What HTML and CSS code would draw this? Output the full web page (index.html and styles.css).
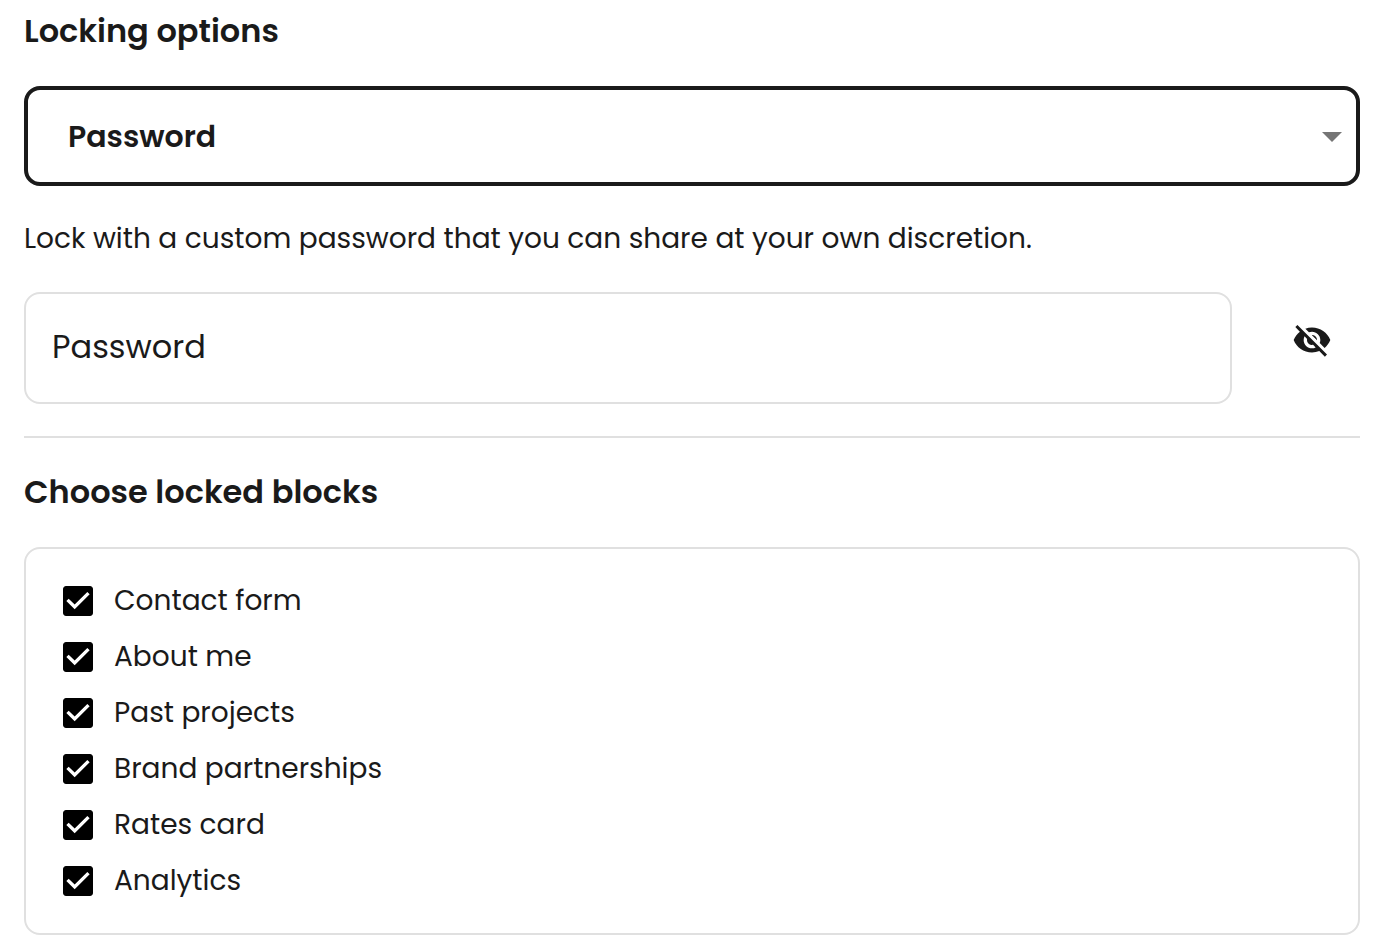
FILE: index.html
```html
<!DOCTYPE html>
<html lang="en">
<head>
    <meta charset="utf-8">
    <title>Locking options</title>
    <link rel="stylesheet" href="styles.css">
</head>
<body>
    <form class="lock-form">
        <section class="options">
            <h2 id="lockingTitle">Locking options</h2>
            <div class="select-wrap">
                <select class="lock-type" aria-labelledby="lockingTitle">
                    <option>Password</option>
                </select>
                <svg class="arrow" viewBox="0 0 20 10" aria-hidden="true"><path d="M0 0h20L10 10z"/></svg>
            </div>
            <p class="hint">Lock with a custom password that you can share at your own discretion.</p>
            <div class="password-row">
                <input class="password" type="text" placeholder="Password" aria-label="Password">
                <button class="toggle" type="button" aria-label="Show password">
                    <svg viewBox="0 0 24 24" aria-hidden="true"><path d="M12 7c2.76 0 5 2.24 5 5 0 .65-.13 1.26-.36 1.83l2.92 2.92c1.51-1.26 2.7-2.89 3.43-4.75-1.73-4.39-6-7.5-11-7.5-1.4 0-2.74.25-3.98.7l2.16 2.16C10.74 7.13 11.35 7 12 7zM2 4.27l2.28 2.28.46.46C3.08 8.3 1.78 10.02 1 12c1.73 4.39 6 7.5 11 7.5 1.55 0 3.03-.3 4.38-.84l.42.42L19.73 22 21 20.73 3.27 3 2 4.27zM7.53 9.8l1.55 1.55c-.05.21-.08.43-.08.65 0 1.66 1.34 3 3 3 .22 0 .44-.03.65-.08l1.55 1.55c-.67.33-1.41.53-2.2.53-2.76 0-5-2.24-5-5 0-.79.2-1.53.53-2.2zm4.31-.78l3.15 3.15.02-.16c0-1.66-1.34-3-3-3l-.17.01z"/></svg>
                </button>
            </div>
        </section>
        <section class="locked">
            <h2>Choose locked blocks</h2>
            <div class="blocks">
                <label class="block"><input type="checkbox" checked><span>Contact form</span></label>
                <label class="block"><input type="checkbox" checked><span>About me</span></label>
                <label class="block"><input type="checkbox" checked><span>Past projects</span></label>
                <label class="block"><input type="checkbox" checked><span>Brand partnerships</span></label>
                <label class="block"><input type="checkbox" checked><span>Rates card</span></label>
                <label class="block"><input type="checkbox" checked><span>Analytics</span></label>
            </div>
        </section>
    </form>
</body>
</html>
```

FILE: styles.css
```css
* {
    box-sizing: border-box;
}
body {
    margin: 0;
    padding: 7px 24px 12px;
    font-family: Poppins, Inter, sans-serif;
    font-size: 28px;
    color: #1a1a1a;
    background: #fff;
}
h2 {
    margin: 0 0 31px;
    font-size: 32px;
    line-height: 48px;
    font-weight: 600;
}
.options {
    padding-bottom: 32px;
    border-bottom: 2px solid #e0e0e0;
}
.select-wrap {
    position: relative;
}
.lock-type {
    display: block;
    width: 100%;
    height: 100px;
    padding: 0 60px 0 40px;
    border: 4px solid #1a1a1a;
    border-radius: 16px;
    appearance: none;
    background: #fff;
    color: inherit;
    font: inherit;
    font-size: 30px;
    font-weight: 600;
}
.arrow {
    position: absolute;
    top: 46px;
    right: 18px;
    width: 20px;
    height: 10px;
    fill: #757575;
    pointer-events: none;
}
.hint {
    margin: 32px 0;
    line-height: 42px;
}
.password-row {
    display: flex;
    gap: 32px;
}
.password {
    flex: 1;
    min-width: 0;
    height: 112px;
    padding: 0 26px 2px;
    border: 2px solid #e0e0e0;
    border-radius: 16px;
    font: inherit;
    font-size: 32px;
}
.password::placeholder {
    color: #1a1a1a;
}
.toggle {
    width: 96px;
    height: 96px;
    padding: 28px;
    border: none;
    background: none;
}
.toggle svg {
    display: block;
    width: 40px;
    height: 40px;
    fill: #1a1a1a;
}
.locked {
    padding-top: 30px;
}
.blocks {
    display: flex;
    flex-direction: column;
    gap: 14px;
    padding: 31px 37px;
    border: 2px solid #e0e0e0;
    border-radius: 16px;
}
.block {
    display: flex;
    align-items: center;
    gap: 21px;
    line-height: 42px;
}
.block input {
    appearance: none;
    width: 30px;
    height: 30px;
    margin: 0;
    border: 1px solid #000;
    border-radius: 3px;
    background: #fff;
}
.block input:checked {
    background: #000 url("data:image/svg+xml,%3Csvg xmlns='http://www.w3.org/2000/svg' viewBox='3 3 18 18'%3E%3Cpath d='M10 17l-5-5 1.41-1.41L10 14.17l7.59-7.59L19 8z' fill='white'/%3E%3C/svg%3E") center / 30px no-repeat;
}
```
